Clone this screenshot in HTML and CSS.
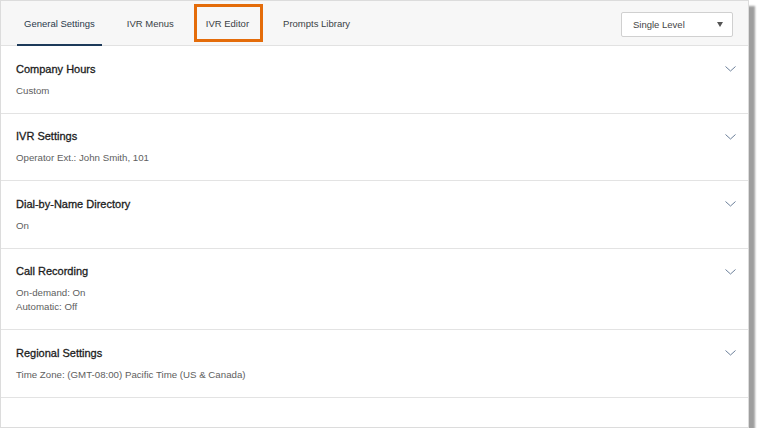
FILE: index.html
```html
<!DOCTYPE html>
<html lang="en">
<head>
  <meta charset="UTF-8">
  <title>IVR Settings</title>
  <link rel="stylesheet" href="styles.css">
</head>
<body>
  <div class="panel">
    <div class="header">
      <div class="tabs">
        <div class="tab active">General Settings</div>
        <div class="tab">IVR Menus</div>
        <div class="tab marked">IVR Editor<span class="mark"></span></div>
        <div class="tab">Prompts Library</div>
      </div>
      <div class="select">
        <span>Single Level</span>
        <span class="caret"></span>
      </div>
    </div>

    <div class="section">
      <div class="title">Company Hours</div>
      <div class="info">Custom</div>
      <svg class="chevron" width="11" height="6" viewBox="0 0 11 6"><polyline points="0.5,0.5 5.5,5 10.5,0.5" fill="none" stroke="#6b7f99" stroke-width="1"/></svg>
    </div>

    <div class="section">
      <div class="title">IVR Settings</div>
      <div class="info">Operator Ext.: John Smith, 101</div>
      <svg class="chevron" width="11" height="6" viewBox="0 0 11 6"><polyline points="0.5,0.5 5.5,5 10.5,0.5" fill="none" stroke="#6b7f99" stroke-width="1"/></svg>
    </div>

    <div class="section">
      <div class="title">Dial-by-Name Directory</div>
      <div class="info">On</div>
      <svg class="chevron" width="11" height="6" viewBox="0 0 11 6"><polyline points="0.5,0.5 5.5,5 10.5,0.5" fill="none" stroke="#6b7f99" stroke-width="1"/></svg>
    </div>

    <div class="section">
      <div class="title">Call Recording</div>
      <div class="info">On-demand: On<br>Automatic: Off</div>
      <svg class="chevron" width="11" height="6" viewBox="0 0 11 6"><polyline points="0.5,0.5 5.5,5 10.5,0.5" fill="none" stroke="#6b7f99" stroke-width="1"/></svg>
    </div>

    <div class="section">
      <div class="title">Regional Settings</div>
      <div class="info">Time Zone: (GMT-08:00) Pacific Time (US &amp; Canada)</div>
      <svg class="chevron" width="11" height="6" viewBox="0 0 11 6"><polyline points="0.5,0.5 5.5,5 10.5,0.5" fill="none" stroke="#6b7f99" stroke-width="1"/></svg>
    </div>
  </div>
</body>
</html>
```

FILE: styles.css
```css
* {
  box-sizing: border-box;
}
body {
  margin: 0;
  background: #fff;
  font-family: "Liberation Sans", Arial, sans-serif;
}
.panel {
  width: 749px;
  height: 428px;
  background: #fff;
  border: 1px solid #dcdcdc;
  box-shadow: 6px 6px 2px rgba(0,0,0,0.38);
}
.header {
  display: flex;
  justify-content: space-between;
  align-items: center;
  height: 45px;
  padding: 0 15px 0 16px;
  background: #f7f7f7;
  border-bottom: 1px solid #e2e2e2;
}
.tabs {
  display: flex;
  gap: 18px;
  align-self: stretch;
}
.tab {
  position: relative;
  display: flex;
  align-items: center;
  padding: 0 7px;
  font-size: 9.5px;
  color: #3a3f45;
}
.tab:last-child {
  margin-left: 2px;
}
.tab.active {
  color: #2a3a4c;
  border-bottom: 2px solid #1d3a5a;
  margin-bottom: -1px;
  padding-top: 1px;
}
.mark {
  position: absolute;
  left: -5px;
  right: -7px;
  top: 3px;
  height: 38px;
  border: 3px solid #e46c0a;
}
.select {
  display: flex;
  justify-content: space-between;
  align-items: center;
  width: 112px;
  height: 25px;
  margin-top: 2px;
  padding: 0 9px 0 11px;
  background: #fff;
  border: 1px solid #d0d0d0;
  border-radius: 2px;
  font-size: 9.5px;
  color: #444;
}
.caret {
  width: 0;
  height: 0;
  border-left: 3px solid transparent;
  border-right: 3px solid transparent;
  border-top: 5px solid #555;
}
.section {
  position: relative;
  padding: 15.5px 15px 15px;
  border-bottom: 1px solid #e3e3e3;
}
.title {
  font-size: 11px;
  line-height: 14px;
  color: #1c1c1c;
  -webkit-text-stroke: 0.3px #1c1c1c;
}
.info {
  margin-top: 8px;
  font-size: 9.7px;
  line-height: 14px;
  color: #5e5e5e;
}
.chevron {
  position: absolute;
  right: 12px;
  top: 20px;
}
```
